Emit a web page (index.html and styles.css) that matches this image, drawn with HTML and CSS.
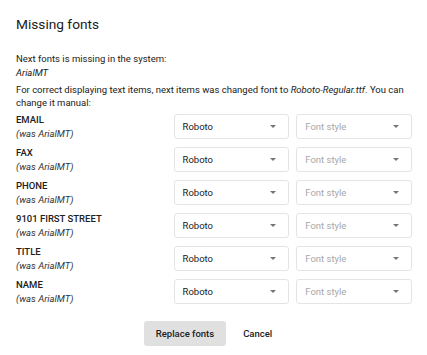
FILE: index.html
```html
<!DOCTYPE html>
<html lang="en">
<head>
    <meta charset="UTF-8" />
    <title>Missing fonts</title>
    <link rel="stylesheet" href="styles.css">
</head>
<body>
    <div class="dialog">
        <h1>Missing fonts</h1>

        <p class="note">Next fonts is missing in the system:</p>
        <p class="note"><em>ArialMT</em></p>
        <p class="note wide">For correct displaying text items, next items was changed font to <em>Roboto-Regular.ttf</em>. You can change it manual:</p>

        <div class="rows">
            <div class="row">
                <div class="label"><strong>EMAIL</strong><em>(was ArialMT)</em></div>
                <div class="select">Roboto<span class="arrow"></span></div>
                <div class="select empty">Font style<span class="arrow"></span></div>
            </div>
            <div class="row">
                <div class="label"><strong>FAX</strong><em>(was ArialMT)</em></div>
                <div class="select">Roboto<span class="arrow"></span></div>
                <div class="select empty">Font style<span class="arrow"></span></div>
            </div>
            <div class="row">
                <div class="label"><strong>PHONE</strong><em>(was ArialMT)</em></div>
                <div class="select">Roboto<span class="arrow"></span></div>
                <div class="select empty">Font style<span class="arrow"></span></div>
            </div>
            <div class="row">
                <div class="label"><strong>9101 FIRST STREET</strong><em>(was ArialMT)</em></div>
                <div class="select">Roboto<span class="arrow"></span></div>
                <div class="select empty">Font style<span class="arrow"></span></div>
            </div>
            <div class="row">
                <div class="label"><strong>TITLE</strong><em>(was ArialMT)</em></div>
                <div class="select">Roboto<span class="arrow"></span></div>
                <div class="select empty">Font style<span class="arrow"></span></div>
            </div>
            <div class="row">
                <div class="label"><strong>NAME</strong><em>(was ArialMT)</em></div>
                <div class="select">Roboto<span class="arrow"></span></div>
                <div class="select empty">Font style<span class="arrow"></span></div>
            </div>
        </div>

        <div class="actions">
            <button class="btn primary">Replace fonts</button>
            <button class="btn">Cancel</button>
        </div>
    </div>
</body>
</html>
```

FILE: styles.css
```css
body {
    margin: 0;
    background: #fff;
    font-family: Roboto, "Noto Sans", sans-serif;
    color: #212121;
}

.dialog {
    width: 399px;
    padding: 16px 12px 0 16px;
}

h1 {
    margin: 0 0 19px;
    font-size: 13.7px;
    font-weight: 400;
    line-height: 17px;
}

.note {
    margin: 0 0 1px;
    font-size: 9.5px;
    line-height: 13px;
}

.note.wide {
    margin-top: 5px;
    line-height: 12.5px;
}

.rows {
    display: flex;
    flex-direction: column;
    gap: 8px;
    margin-top: 5px;
    width: 396px;
}

.row {
    display: flex;
    align-items: center;
    gap: 7px;
    height: 25px;
}

.label {
    width: 151px;
    display: flex;
    flex-direction: column;
    gap: 1px;
    font-size: 9.5px;
    line-height: 13px;
}

.label strong {
    font-weight: 500;
}

.label em {
    color: #333;
}

.select {
    width: 116px;
    height: 25px;
    box-sizing: border-box;
    border: 1px solid #e4e4e4;
    border-radius: 3px;
    padding: 0 12px 0 8px;
    display: flex;
    align-items: center;
    justify-content: space-between;
    font-size: 9.5px;
}

.select.empty {
    color: #a8a8a8;
}

.arrow {
    width: 0;
    height: 0;
    border-left: 3.5px solid transparent;
    border-right: 3.5px solid transparent;
    border-top: 3.5px solid #757575;
}

.actions {
    display: flex;
    justify-content: center;
    gap: 5px;
    margin-top: 17px;
    width: 396px;
}

.btn {
    height: 25px;
    padding: 0 12px;
    border: none;
    border-radius: 3px;
    background: none;
    font-family: inherit;
    font-size: 9.5px;
    font-weight: 500;
    color: #212121;
}

.btn.primary {
    background: #e0e0e0;
}
```
